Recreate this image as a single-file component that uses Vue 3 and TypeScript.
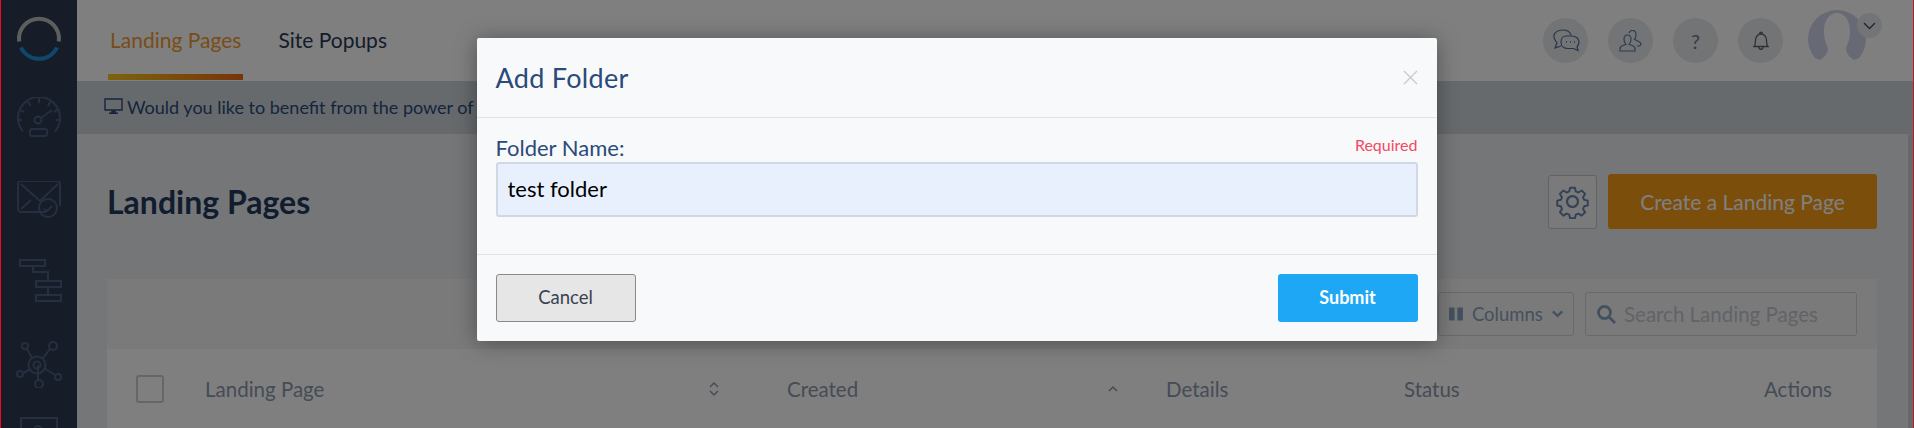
<script setup lang="ts">
const columns = [
  { label: 'Landing Page', width: 582, pad: 67, sort: 'both' },
  { label: 'Created', width: 379, pad: 47, sort: 'up' },
  { label: 'Details', width: 238, pad: 0, sort: '' },
  { label: 'Status', width: 360, pad: 0, sort: '' },
];
</script>

<template>
  <div class="page">
    <aside class="sidebar">
      <svg class="logo" width="50" height="50" viewBox="0 0 50 50" fill="none" stroke-width="4">
        <path d="M5.2 27.5A20 20 0 1 1 44.8 27.5" stroke="#bdbdbd" />
        <path d="M7 33.5A20 20 0 0 0 43 33.5" stroke="#1e90d8" />
      </svg>
      <svg class="nav-icon gauge" width="46" height="44" viewBox="0 0 46 44" fill="none">
        <path d="M7 34.500A21 21 0 1 1 39 34.500" />
        <path d="M23 1v5M12 4.500l2.500 4.500M3.800 12.500l4.200 2.500M1 23h5M40 23h5M32 9l2-4M38 15l4-2.500" />
        <circle cx="22" cy="23" r="3.500" />
        <path d="M25 21l11-8" />
        <rect x="14" y="32" width="17" height="7" rx="2" />
      </svg>
      <svg class="nav-icon mail" width="46" height="38" viewBox="0 0 46 38" fill="none">
        <path d="M30 31H5a3 3 0 0 1-3-3V3a3 3 0 0 1 3-3h36a3 3 0 0 1 3 3v22" />
        <path d="M5 3l19 17L42 3M5 28l10-9" />
        <circle cx="32" cy="27" r="9" />
        <path d="M28 28l3 2 5-5" />
      </svg>
      <svg class="nav-icon flow" width="46" height="46" viewBox="0 0 46 46" fill="none">
        <rect x="2" y="2" width="25" height="6" />
        <rect x="18" y="23" width="25" height="6" />
        <rect x="18" y="37" width="25" height="6" />
        <path d="M15 8v6h15v9M30 29v8" />
      </svg>
      <svg class="nav-icon net" width="46" height="48" viewBox="0 0 46 48" fill="none">
        <circle cx="21" cy="25" r="8.500" />
        <circle cx="21" cy="25" r="3.500" />
        <circle cx="9" cy="6" r="3" />
        <circle cx="37" cy="6" r="4" />
        <circle cx="4" cy="34" r="3" />
        <circle cx="42" cy="37" r="3" />
        <circle cx="23" cy="44" r="4" />
        <path d="M11 9l5 9M34 9l-7 9M7 33l8-4M39 35l-11-7M22 40v-15" />
      </svg>
      <svg class="nav-icon last" width="40" height="20" viewBox="0 0 40 20" fill="none">
        <path d="M2 20V2h36v18" />
        <circle cx="19" cy="14" r="4" />
      </svg>
    </aside>

    <div class="main">
      <header class="topbar">
        <nav class="tabs">
          <a class="tab active">Landing Pages</a>
          <a class="tab">Site Popups</a>
        </nav>
        <div class="top-icons">
          <span class="round">
            <svg width="28" height="24" viewBox="0 0 28 24" fill="none" stroke="#4d6a96" stroke-width="1.200">
              <path d="M9 17l-6 2 2-5C2 10 1.500 8 2 6c1-3 5-5 9-5 4 0 7 2 8 5" />
              <path d="M14 7h6c4 0 7 2.500 7 6 0 2-1 3.500-2 4.500l1 4-4.500-2H16c-4 0-7-2.500-7-6.500 0-3.500 2-6 5-6z" />
              <path d="M14 13h1M18 13h1M22 13h1" stroke-width="1.600" />
            </svg>
          </span>
          <span class="round">
            <svg width="24" height="22" viewBox="0 0 24 22" fill="none" stroke="#5878aa" stroke-width="1.200">
              <path d="M1 21v-2c0-2 1-3 3-3.500l3-1.200c-1.500-1.500-2-3-2-5 0-2.500 1.500-4.300 3.500-4.300S12 6.800 12 9.300c0 2-.5 3.500-2 5l3 1.200c2 .5 3 1.500 3 3.500v2z" />
              <path d="M10 3c.5-1.500 2-2.500 3.500-2.500 2.300 0 3.500 2 3.500 4.300 0 2-.5 3.300-1.500 4.500l3.500 2c1.500.5 3 1.500 3 3 0 1.500-2 2-4 1.500" />
            </svg>
          </span>
          <span class="round help">?</span>
          <span class="round">
            <svg width="16" height="20" viewBox="0 0 16 20" fill="none" stroke="#58626f" stroke-width="1.300">
              <path d="M1 15.500h14c-1.500-1.500-1.500-3-1.500-6.500 0-3.500-2.500-6-5.500-6S2.500 5.500 2.500 9c0 3.500 0 5-1.500 6.500z" />
              <path d="M7 3V1.500h2V3M6 16c0 3 4 3 4 0" />
            </svg>
          </span>
          <span class="avatar">
            <svg width="58" height="50" viewBox="0 0 58 50">
              <path d="M7 48A29 29 0 1 1 51 48L46 50H12z" fill="#cfd5e8" />
              <path d="M12 50c5-3 8-7 8-12-2-5-4-9-4-17C16 11 21 3 29 3s13 8 13 18c0 8-2 12-4 17 0 5 3 9 8 12z" fill="#ffffff" />
            </svg>
            <span class="avatar-caret">
              <svg width="13" height="8" viewBox="0 0 13 8" fill="none" stroke="#3d4a60" stroke-width="1.300"><path d="M1 1l5.500 5.500L12 1" /></svg>
            </span>
          </span>
        </div>
      </header>

      <div class="banner">
        <svg width="19" height="17" viewBox="0 0 19 17">
          <path d="M1 1h17v11H1z" fill="none" stroke="#2a4a7a" stroke-width="1.400" />
          <path d="M7.500 12.500h4l.5 2h2v1.500H5v-1.500h2z" fill="#2a4a7a" />
        </svg>
        <span>Would you like to benefit from the power of the most advanced tools</span>
      </div>

      <section class="content">
        <div class="title-row">
          <h1>Landing Pages</h1>
          <button class="gear" type="button">
            <svg width="35" height="35" viewBox="0 0 32 32" fill="none" stroke="#6585ae" stroke-width="2">
              <circle cx="16" cy="16" r="5" />
              <path d="M13.500 2h5l.8 3.800 2.700 1.100 3.300-2.100 3.500 3.500-2.100 3.300 1.100 2.700 3.700.8v5l-3.700.8-1.100 2.700 2.100 3.300-3.500 3.500-3.300-2.100-2.700 1.100-.8 3.700h-5l-.8-3.700-2.700-1.100-3.300 2.100-3.500-3.500 2.100-3.300-1.100-2.700-3.700-.8v-5l3.700-.8 1.100-2.700-2.100-3.300 3.500-3.500 3.300 2.100 2.700-1.100z" transform="translate(1.600 1.600) scale(.9)" stroke-linejoin="round" />
            </svg>
          </button>
          <button class="create" type="button">Create a Landing Page</button>
        </div>

        <div class="table-card">
          <div class="toolbar">
            <button class="columns" type="button">
              <svg width="15" height="14" viewBox="0 0 15 14"><path d="M0 0h6v14H0zM9 0h6v14H9z" fill="#8aa0bf" /></svg>
              Columns
              <svg width="12" height="8" viewBox="0 0 12 8" fill="none" stroke="#8aa0bf" stroke-width="2.400"><path d="M1 1.200l5 4.800 5-4.800" /></svg>
            </button>
            <label class="search">
              <svg width="19" height="19" viewBox="0 0 19 19" fill="none" stroke="#8aa0bf" stroke-width="2.800">
                <circle cx="7.500" cy="7.500" r="6" />
                <path d="M12 12l6 6" />
              </svg>
              <input type="text" placeholder="Search Landing Pages" />
            </label>
          </div>
          <div class="thead">
            <span class="check"></span>
            <div
              v-for="col in columns"
              :key="col.label"
              class="th"
              :style="{ width: col.width + 'px', paddingRight: col.pad + 'px' }"
            >
              <span>{{ col.label }}</span>
              <svg v-if="col.sort === 'both'" width="12" height="16" viewBox="0 0 12 16" fill="none" stroke="#8c96a8" stroke-width="1.500">
                <path d="M2 6l4-4 4 4M2 10l4 4 4-4" />
              </svg>
              <svg v-if="col.sort === 'up'" width="12" height="8" viewBox="0 0 12 8" fill="none" stroke="#8c96a8" stroke-width="1.500">
                <path d="M2 6l4-4 4 4" />
              </svg>
            </div>
            <div class="th actions">Actions</div>
          </div>
        </div>
      </section>
    </div>

    <div class="scrollbar"></div>

    <div class="overlay">
      <div class="modal">
        <div class="modal-head">
          <h2>Add Folder</h2>
          <svg width="15" height="15" viewBox="0 0 15 15" fill="none" stroke="#c8cbcf" stroke-width="1.400">
            <path d="M1 1l13 13M14 1L1 14" />
          </svg>
        </div>
        <div class="modal-body">
          <div class="label-row">
            <label for="folder-name">Folder Name:</label>
            <span class="required">Required</span>
          </div>
          <input id="folder-name" type="text" value="test folder" />
        </div>
        <div class="modal-foot">
          <button class="cancel" type="button">Cancel</button>
          <button class="submit" type="button">Submit</button>
        </div>
      </div>
    </div>

    <div class="edge left"></div>
    <div class="edge right"></div>
  </div>
</template>

<style>
html, body { margin: 0; height: 428px; overflow: hidden; }
</style>

<style scoped>
.page { position: relative; display: flex; width: 1914px; height: 428px; overflow: hidden; font-family: Lato, "Noto Sans", sans-serif; color: #2a4a7a; }
button { font-family: inherit; cursor: pointer; }

.sidebar { flex: 0 0 77px; height: 428px; background: #2c3a52; display: flex; flex-direction: column; align-items: center; overflow: hidden; }
.logo { margin-top: 14px; flex: none; }
.nav-icon { flex: none; stroke: #4c5e80; stroke-width: 2; }
.gauge { margin-top: 33px; }
.mail { margin-top: 40px; }
.flow { margin-top: 39px; margin-left: 5px; }
.net { margin-top: 36px; }
.last { margin-top: 28px; }

.main { flex: 1; min-width: 0; display: flex; flex-direction: column; }
.topbar { height: 81px; flex: none; background: #fff; display: flex; justify-content: space-between; padding-left: 31px; box-sizing: border-box; }
.tabs { display: flex; gap: 33px; }
.tab { height: 74px; padding: 0 2px; margin-bottom: 7px; font-size: 21px; line-height: 80px; color: #2a3a55; position: relative; }
.tab.active { color: #f29a30; }
.tab.active::after { content: ""; position: absolute; left: 0; right: 0; top: 74px; height: 6px; background: linear-gradient(90deg, #f7c81c, #f06a12); }
.top-icons { display: flex; align-items: flex-start; gap: 20px; padding: 18px 48px 0 0; }
.round { width: 45px; height: 45px; border-radius: 50%; background: #e6e8ec; display: flex; align-items: center; justify-content: center; }
.help { font-size: 20px; color: #6a7688; }
.avatar { position: relative; width: 58px; height: 50px; margin: -8px 0 0 5px; }
.avatar-caret { position: absolute; left: 49px; top: 3px; width: 25px; height: 25px; border-radius: 50%; background: #e6e8ec; display: flex; align-items: center; justify-content: center; }

.banner { height: 53px; flex: none; box-sizing: border-box; background: #cdd5da; display: flex; align-items: center; gap: 4px; padding: 0 0 2px 27px; font-size: 18px; color: #2a4a7a; white-space: nowrap; }

.content { flex: 1; background: #eaecf0; padding: 40px 37px 0 30px; }
.title-row { display: flex; align-items: center; height: 55px; }
h1 { margin: 0 auto 0 0; font-size: 32px; font-weight: 700; color: #223a5e; }
.gear { width: 49px; height: 54px; padding: 0; margin-right: 11px; border: 1px solid #c0c4ca; border-radius: 3px; background: #f4f5f7; display: flex; align-items: center; justify-content: center; }
.create { width: 269px; height: 55px; border: 0; border-radius: 3px; background: #f89c18; color: #fff; font-size: 21px; }

.table-card { margin-top: 50px; background: #fff; border-radius: 3px 3px 0 0; }
.toolbar { height: 70px; background: #f4f5f7; display: flex; justify-content: flex-end; align-items: center; gap: 11px; padding-right: 20px; box-sizing: border-box; }
.columns { width: 136px; height: 44px; border: 1px solid #cfd2d6; border-radius: 3px; background: #f4f5f7; color: #8aa0bf; font-size: 18.5px; display: flex; align-items: center; justify-content: flex-end; gap: 9px; padding: 0 10px; }
.search { width: 272px; height: 44px; box-sizing: border-box; border: 1px solid #cfd2d6; border-radius: 3px; display: flex; align-items: center; gap: 8px; padding-left: 11px; }
.search input { border: 0; outline: 0; padding: 0; background: transparent; flex: 1; min-width: 0; font-family: inherit; font-size: 20.5px; }
.search input::placeholder { color: #c2c7ce; }

.thead { display: flex; align-items: center; height: 80px; color: #8a98ad; font-size: 20.5px; }
.check { flex: none; width: 28px; height: 28px; margin: 0 41px 0 29px; box-sizing: border-box; border: 2px solid #c8ccd2; border-radius: 3px; }
.th { flex: none; display: flex; align-items: center; justify-content: space-between; box-sizing: border-box; }
.actions { width: auto; }

.scrollbar { position: absolute; right: 1px; top: 134px; width: 5px; height: 294px; background: #cfd0d3; border-radius: 3px 3px 0 0; }

.overlay { position: absolute; inset: 0; background: rgba(0, 0, 0, 0.5); display: flex; justify-content: center; align-items: flex-start; padding-top: 38px; box-sizing: border-box; }
.modal { width: 960px; height: 303px; margin-left: -1px; background: #f8f9fb; box-shadow: 0 2px 22px rgba(0, 0, 0, 0.35); border-radius: 2px; display: flex; flex-direction: column; }
.modal-head { height: 80px; flex: none; box-sizing: border-box; border-bottom: 1px solid #e1e4e8; display: flex; align-items: center; justify-content: space-between; padding: 0 19px 0 19px; }
h2 { margin: 0; font-size: 27px; font-weight: 400; letter-spacing: 0.3px; color: #2a4a7a; }
.modal-body { flex: 1; padding: 0 19px; }
.label-row { display: flex; justify-content: space-between; align-items: flex-end; height: 44px; }
.label-row label { font-size: 22px; color: #2a4a7a; line-height: 26px; padding-bottom: 1px; }
.required { font-size: 16px; color: #f4485f; line-height: 26px; padding-bottom: 4px; }
#folder-name { display: block; width: 100%; height: 55px; box-sizing: border-box; border: 2px solid #d0d8e4; border-radius: 3px; background: #e8f0fe; padding: 0 10px 2px; font-family: inherit; font-size: 22px; color: #000; outline: 0; }
.modal-foot { height: 87px; flex: none; box-sizing: border-box; border-top: 1px solid #e1e4e8; display: flex; justify-content: space-between; align-items: flex-start; padding: 19px 19px 0; }
.cancel, .submit { width: 140px; height: 48px; border-radius: 3px; font-size: 18px; padding: 0 0 3px; }
.cancel { background: #e6e6e6; border: 1px solid #8a8a8a; color: #3a4250; font-size: 18.5px; }
.submit { background: #1ea7f5; border: 0; color: #fff; font-weight: 700; }

.edge { position: absolute; top: 0; bottom: 0; width: 1px; background: #e8101c; }
.edge.left { left: 0; }
.edge.right { right: 0; background: #b02028; }
</style>
